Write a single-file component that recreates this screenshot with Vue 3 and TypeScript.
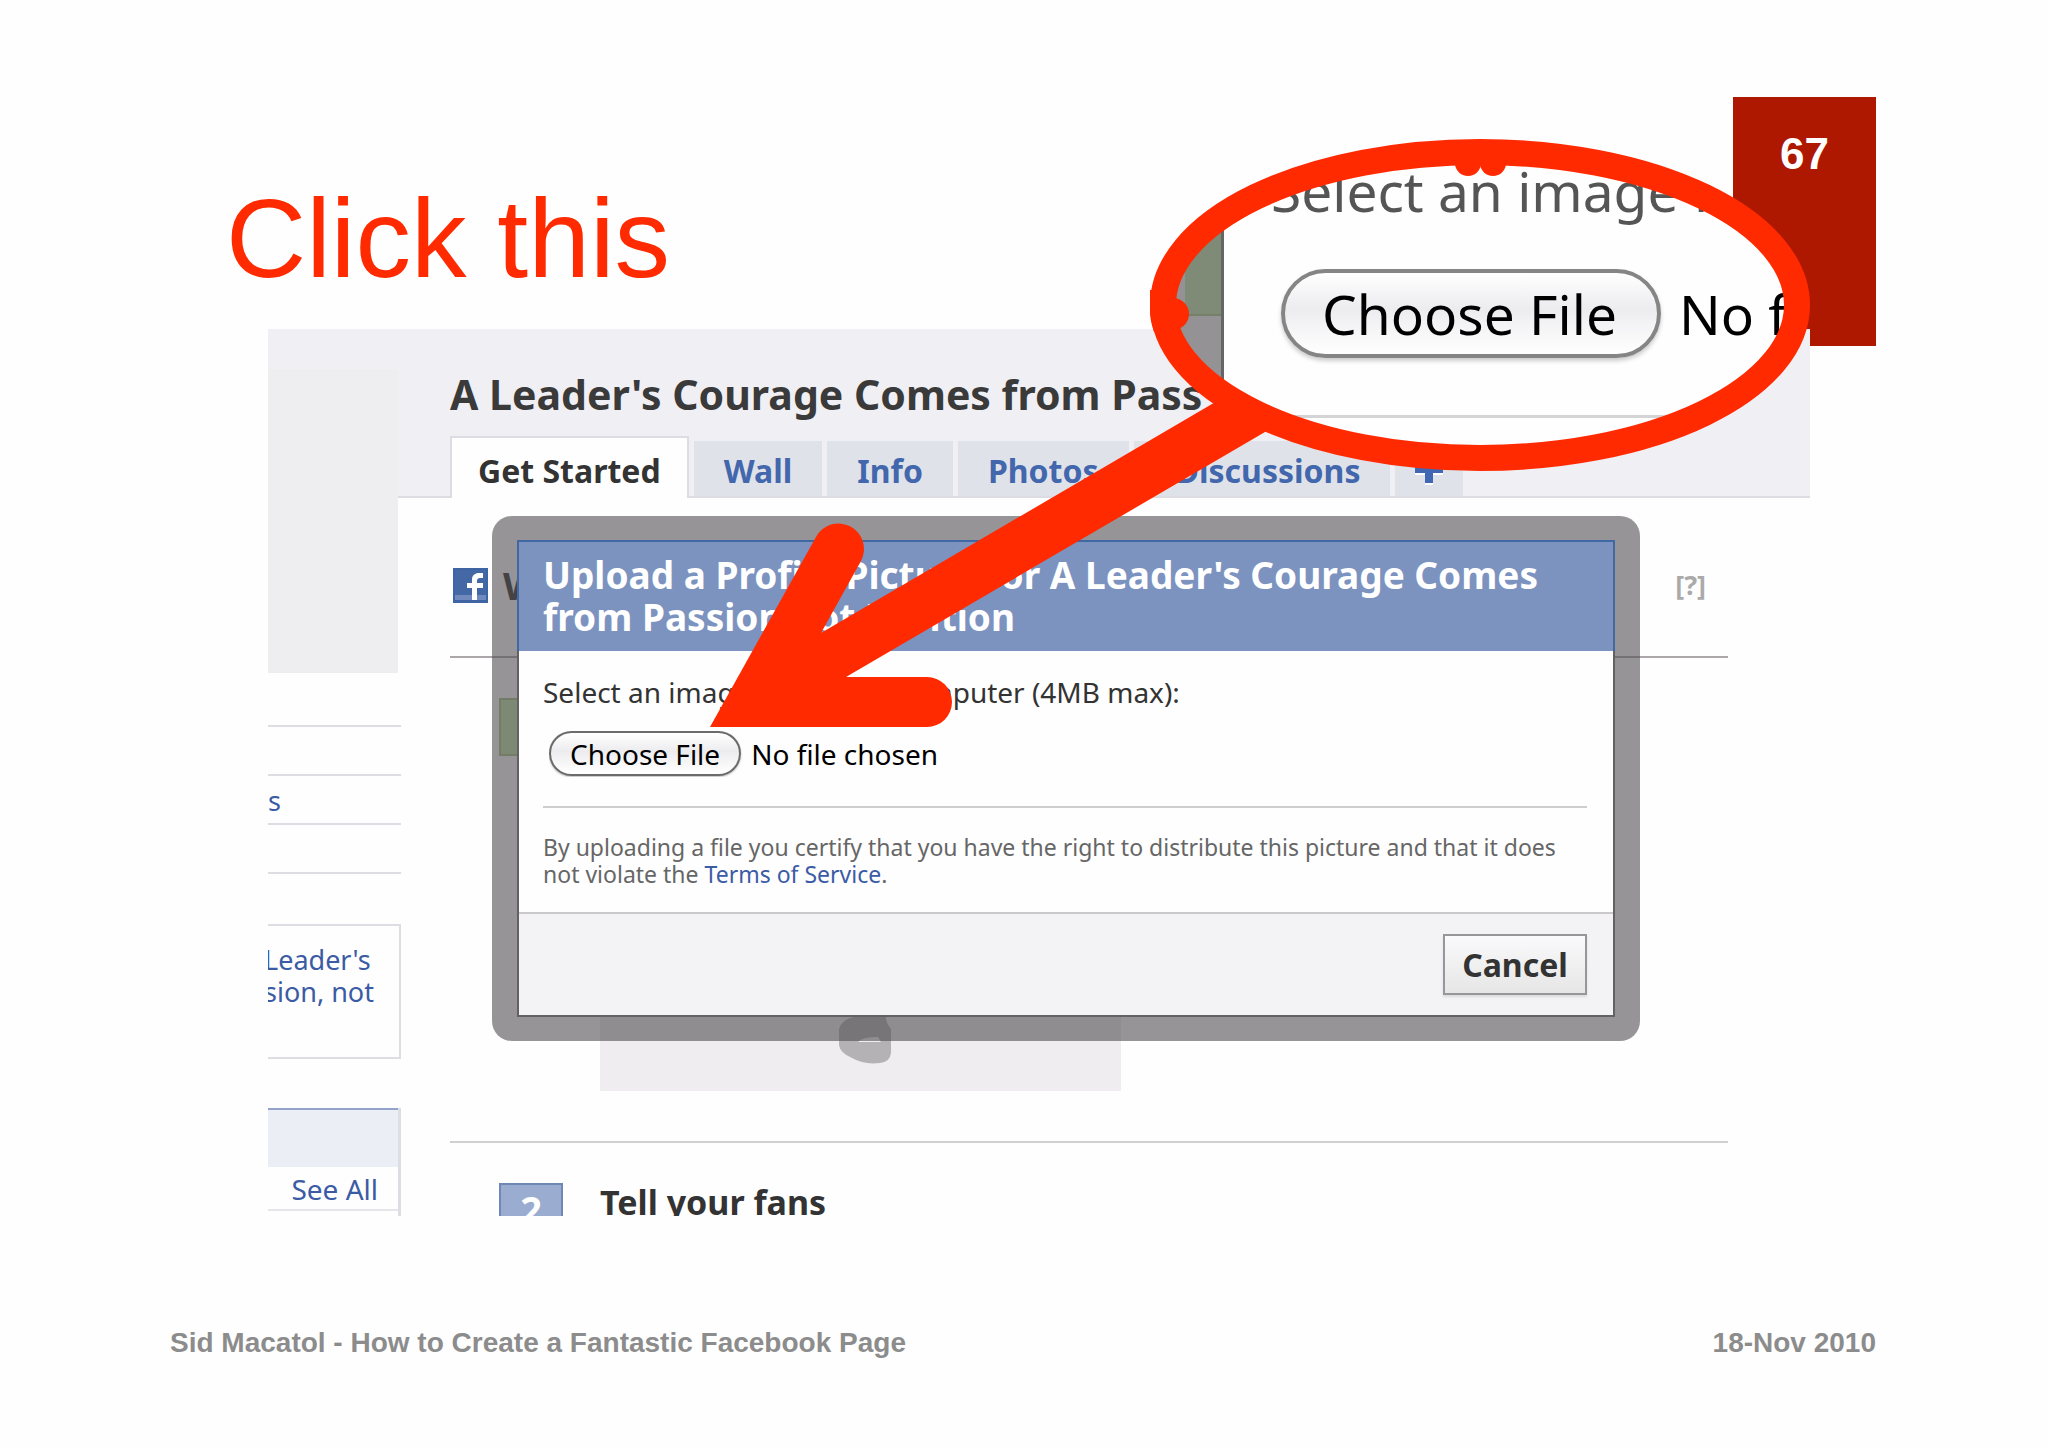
<script setup lang="ts">
interface Tab {
  label: string
  active?: boolean
  wide?: boolean
}

const tabs: Tab[] = [
  { label: 'Get Started', active: true },
  { label: 'Wall' },
  { label: 'Info' },
  { label: 'Photos' },
  { label: 'Discussions', wide: true },
]
const menuRows: string[] = ['', '', 's', '']
</script>

<template>
  <main class="slide">
    <header class="slide-head">
      <h1>Click this</h1>
      <div class="page-no">67</div>
    </header>

    <section class="shot">
      <aside class="side">
        <div class="photo"></div>
        <ul class="menu">
          <li v-for="(row, i) in menuRows" :key="i"><a v-if="row" href="#">{{ row }}</a></li>
        </ul>
        <div class="about"><a href="#">Leader's<br />sion, not</a></div>
        <div class="fans">
          <div class="fans-head"></div>
          <div class="fans-all"><a href="#">See All</a></div>
        </div>
      </aside>

      <div class="page">
        <div class="page-head">
          <h2>A Leader's Courage Comes from Pass</h2>
          <nav class="tabs">
            <a
              v-for="t in tabs"
              :key="t.label"
              href="#"
              class="tab"
              :class="{ active: t.active, wide: t.wide }"
            >{{ t.label }}</a>
            <a href="#" class="tab plus" aria-label="Add tab">
              <svg width="28" height="30" viewBox="0 0 28 30">
                <path d="M10 3h8v10h10v7H18v10H10V20H0v-7h10z" fill="#fff" />
                <path d="M10 1h8v10h10v7H18v10H10V18H0v-7h10z" fill="#4267b2" />
              </svg>
            </a>
          </nav>
        </div>

        <div class="page-body">
          <div class="welcome">
            <svg class="fb" width="35" height="35" viewBox="0 0 35 35">
              <rect width="35" height="35" fill="#3f64a3" />
              <rect x="2" y="2" width="31" height="25" fill="#4468a6" />
              <rect x="2" y="27" width="31" height="5" fill="#7189bd" />
              <path d="M19 32V20h-5v-5h5v-3c0-5 3-7 7-7h4v5h-3c-2 0-3 1-3 3v2h6v5h-6v12z" fill="#fff" />
            </svg>
            <b>W</b>
            <a href="#" class="help">[?]</a>
          </div>
          <div class="step first">
            <div class="num done"></div>
            <div class="preview">
              <svg width="56" height="50" viewBox="0 0 56 50">
                <path d="M16 2Q32 0 48 2Q47 6 53 14V38Q52 47 42 48Q26 50 14 43Q2 38 1 30V14Q4 4 16 2z" fill="#b5b2b5" />
                <path d="M20 27Q24 22 40 22L43 27z" fill="#efedf0" />
              </svg>
            </div>
          </div>
          <div class="step second">
            <div class="num">2</div>
            <h3>Tell your fans</h3>
          </div>
        </div>
      </div>

      <div class="dialog" role="dialog">
        <div class="dialog-box">
          <h2 class="dialog-title">Upload a Profile Picture for A Leader's Courage Comes<br />from Passion not Position</h2>
          <div class="dialog-body">
            <label for="picture">Select an image from your computer (4MB max):</label>
            <input id="picture" type="file" />
            <p>
              By uploading a file you certify that you have the right to distribute this picture and that it does<br />
              not violate the <a href="#">Terms of Service</a>.
            </p>
          </div>
          <div class="dialog-foot"><button type="button" class="cancel">Cancel</button></div>
        </div>
      </div>
    </section>

    <div class="lens">
      <div class="gutter"><div class="green"></div></div>
      <div class="lens-body">
        <div class="lens-label">Select an image f</div>
        <div class="lens-row"><button type="button">Choose File</button><span>No file</span></div>
        <div class="lens-rule"></div>
      </div>
    </div>
    <svg class="arrow" width="1102" height="589" viewBox="709 139 1102 589">
      <ellipse cx="1480" cy="305" rx="317" ry="153" fill="none" stroke="#ff2a00" stroke-width="26" />
      <g fill="#ff2a00">
        <circle cx="1468" cy="163" r="13" />
        <circle cx="1493" cy="163" r="13" />
        <circle cx="1173" cy="314" r="16" />
        <path d="M1150 290h12v42h-8q-4-12-4-20z" />
        <path d="M710 727L816 537A25.500 25.500 0 0 1 861 561L821 633L1212 404L1230 395L1275 420L1265 432L846 677H927A25 25 0 0 1 927 727z" />
      </g>
    </svg>

    <footer class="slide-foot">
      <span>Sid Macatol - How to Create a Fantastic Facebook Page</span>
      <span>18-Nov 2010</span>
    </footer>
  </main>
</template>

<style>
body {
  margin: 0;
  background: #fefefe;
}
</style>

<style scoped>
* {
  box-sizing: border-box;
}
h1, h2, h3, p, ul {
  margin: 0;
  padding: 0;
  list-style: none;
}
a {
  color: #3b5ba5;
  text-decoration: none;
}
svg {
  display: block;
}
.slide {
  position: relative;
  min-height: 100vh;
  padding: 97px 172px 0;
  font-family: "Liberation Sans", Arial, sans-serif;
  overflow: hidden;
}
.slide-head {
  display: flex;
  justify-content: space-between;
  height: 232px;
}
.slide-head h1 {
  padding: 80px 0 0 54px;
  font-size: 111px;
  line-height: 124px;
  font-weight: 400;
  color: #ff2a00;
}
.page-no {
  width: 143px;
  height: 249px;
  padding-top: 32px;
  background: #ae1800;
  color: #fff;
  font-size: 44px;
  line-height: 50px;
  font-weight: 700;
  text-align: center;
}
.shot {
  position: relative;
  display: flex;
  height: 887px;
  margin: 0 66px 0 96px;
  background: #fefefe;
  font-family: "Noto Sans", "Open Sans", sans-serif;
  white-space: nowrap;
  overflow: hidden;
}
.side {
  width: 130px;
  flex: none;
  font-size: 27px;
  line-height: 32px;
}
.photo {
  height: 344px;
  background: linear-gradient(#f0eff3 40px, #eeeef1 40px);
}
.menu, .about, .fans {
  margin-right: -3px;
}
.menu li {
  height: 49px;
  padding-top: 9px;
  border-bottom: 2px solid #dddde4;
}
.menu li:first-child {
  height: 54px;
}
.about {
  height: 135px;
  margin-top: 50px;
  padding-top: 18px;
  border: 2px solid #dddde4;
  border-left: 0;
}
.about a {
  display: block;
  margin-left: -4px;
}
.fans {
  height: 120px;
  margin-top: 49px;
  border-right: 3px solid #dddde4;
}
.fans-head {
  height: 59px;
  border-top: 2px solid #94a3cc;
  background: #eceef5;
}
.fans-all {
  height: 44px;
  padding: 6px 20px 0 0;
  border-bottom: 2px solid #e6e6ea;
  font-size: 28px;
  text-align: right;
}
.page {
  flex: 1;
  min-width: 0;
}
.page-head {
  height: 169px;
  padding: 41px 0 0 52px;
  background: #f0eff3;
  box-shadow: inset 0 -2px #dcdce2;
}
.page-head h2 {
  margin-bottom: 18px;
  font-size: 41px;
  line-height: 48px;
  color: #3a3a3a;
}
.tabs {
  display: flex;
  align-items: flex-end;
  gap: 5px;
  height: 62px;
}
.tab {
  height: 55px;
  margin-bottom: 2px;
  padding: 6px 30px 0;
  background: #e0e2ea;
  font-size: 32px;
  line-height: 48px;
  font-weight: 700;
  color: #4267ac;
}
.tab.active {
  height: 62px;
  margin-bottom: 0;
  padding: 9px 26px 0;
  border: 2px solid #dcdce2;
  border-bottom: 0;
  background: #fefefe;
  color: #333;
}
.tab.wide {
  padding-left: 42px;
}
.tab.plus {
  padding: 14px 20px 0;
}
.page-body {
  padding: 0 82px 0 52px;
}
.welcome {
  display: flex;
  align-items: center;
  height: 160px;
  padding: 16px 22px 0 3px;
  border-bottom: 2px solid #aaa6a9;
}
.welcome b {
  flex: 1;
  padding-left: 15px;
  font-size: 38px;
  line-height: 48px;
  color: #333;
}
.help {
  font-size: 27px;
  line-height: 32px;
  font-weight: 700;
  color: #aaa;
}
.step {
  display: flex;
  padding: 40px 0 0 49px;
}
.step.first {
  height: 485px;
  border-bottom: 2px solid #d0cfd1;
}
.num {
  width: 64px;
  height: 58px;
  margin-right: 37px;
  border: 2px solid #6f87b5;
  background: #9aaccf;
  color: #fff;
  font-size: 38px;
  line-height: 48px;
  font-weight: 700;
  text-align: center;
}
.num.done {
  border-color: #a5c488;
  background: #c0e4a5;
}
.preview {
  display: flex;
  align-items: flex-end;
  width: 521px;
  height: 393px;
  padding: 0 0 26px 238px;
  background: #efedf0;
}
.step h3 {
  font-size: 34px;
  line-height: 38px;
  color: #333;
}
.dialog {
  position: absolute;
  top: 187px;
  left: 224px;
  right: 170px;
  padding: 24px 25px;
  border-radius: 20px;
  background: rgba(80, 77, 80, 0.6);
}
.dialog-box {
  border: 2px solid #636163;
  border-top: 0;
  background: #fefefe;
}
.dialog-title {
  margin: 0 -2px;
  padding: 12px 24px 13px;
  border: 2px solid #4068a4;
  border-bottom: 0;
  background: #7c93c0;
  font-size: 37px;
  line-height: 42px;
  color: #fff;
}
.dialog-body {
  padding: 25px 26px 24px 24px;
}
.dialog-body label {
  display: block;
  font-size: 28px;
  line-height: 32px;
  color: #333;
}
.dialog-body input {
  display: block;
  height: 46px;
  margin: 23px 0 29px 6px;
  font-family: inherit;
  font-size: 28px;
  line-height: 44px;
  color: #000;
}
.dialog-body input::file-selector-button,
.lens-row button {
  height: 45px;
  margin: 0 10px 0 0;
  padding: 0 19px;
  border: 2px solid #6b6b6b;
  border-radius: 23px;
  background: linear-gradient(#fff, #ececef 45%, #f2f2f4 60%, #fff);
  box-shadow: 0 1px 2px #bbb;
  font-family: inherit;
  font-size: 28px;
  line-height: 38px;
  color: #000;
}
.dialog-body p {
  padding-top: 26px;
  border-top: 2px solid #cfcdd0;
  font-size: 23px;
  line-height: 27px;
  color: #666;
}
.dialog-foot {
  display: flex;
  justify-content: flex-end;
  padding: 20px 26px;
  border-top: 2px solid #cac8cb;
  background: #f3f2f5;
}
.cancel {
  width: 144px;
  height: 61px;
  padding: 0;
  border: 2px solid #98969a;
  border-radius: 0;
  background: linear-gradient(#fafafc, #e6e6e6);
  box-shadow: 0 2px 2px #dcdcde;
  font-family: inherit;
  font-size: 32px;
  font-weight: 700;
  color: #333;
}
.lens {
  position: absolute;
  top: 151px;
  left: 1162px;
  display: flex;
  width: 636px;
  height: 308px;
  border-radius: 50%;
  background: #fefefe;
  font-family: "Noto Sans", "Open Sans", sans-serif;
  white-space: nowrap;
  overflow: hidden;
}
.gutter {
  flex: none;
  width: 62px;
  padding-left: 23px;
  border-right: 3px solid #666;
  background: #949294;
}
.green {
  height: 165px;
  border-bottom: 2px solid #74806a;
  background: #7f8b77;
}
.lens-body {
  flex: 1;
  min-width: 0;
  padding: 10px 0 0 47px;
}
.lens-label {
  font-size: 55px;
  line-height: 60px;
  color: #555;
}
.lens-row {
  display: flex;
  align-items: center;
  margin: 48px 0 57px 10px;
  font-size: 55px;
  line-height: 60px;
}
.lens-row button {
  height: 89px;
  margin: 0 18px 0 0;
  padding: 0 40px 0 37px;
  border: 4px solid #858585;
  border-radius: 45px;
  box-shadow: 0 3px 4px #ccc;
  font-size: 55px;
  line-height: 76px;
}
.lens-rule {
  height: 3px;
  margin-left: -47px;
  background: #d4d3d5;
}
.arrow {
  position: absolute;
  top: 139px;
  left: 709px;
}
.slide-foot {
  display: flex;
  justify-content: space-between;
  margin: 111px 0 0 -2px;
  font-size: 28px;
  line-height: 32px;
  font-weight: 700;
  color: #8c8c8c;
}
</style>
